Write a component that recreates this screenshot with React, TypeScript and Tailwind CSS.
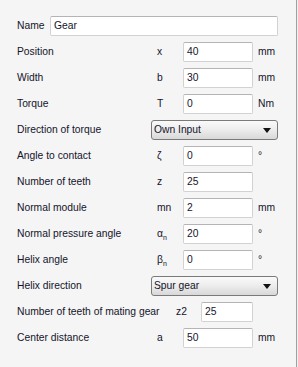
import React from 'react';

type Row = {
  label: string;
  symbol?: React.ReactNode;
  value?: string;
  unit?: string;
  select?: string;
};

const rows: Row[] = [
  { label: 'Position', symbol: 'x', value: '40', unit: 'mm' },
  { label: 'Width', symbol: 'b', value: '30', unit: 'mm' },
  { label: 'Torque', symbol: 'T', value: '0', unit: 'Nm' },
  { label: 'Direction of torque', select: 'Own Input' },
  { label: 'Angle to contact', symbol: 'ζ', value: '0', unit: '°' },
  { label: 'Number of teeth', symbol: 'z', value: '25' },
  { label: 'Normal module', symbol: 'mn', value: '2', unit: 'mm' },
  {
    label: 'Normal pressure angle',
    symbol: (
      <span>
        α<span className="text-[7px] relative top-[3px]">n</span>
      </span>
    ),
    value: '20',
    unit: '°',
  },
  {
    label: 'Helix angle',
    symbol: (
      <span>
        β<span className="text-[7px] relative top-[3px]">n</span>
      </span>
    ),
    value: '0',
    unit: '°',
  },
  { label: 'Helix direction', select: 'Spur gear' },
];

const inputCls =
  'h-[20px] bg-white border border-[#d2d2d2] border-t-[#b4b4b4] rounded-[2px] pl-[3px] flex items-center';

const Select: React.FC<{ value: string }> = ({ value }) => (
  <div className="ml-[134px] w-[127px] h-[20px] rounded-[3px] border border-[#7a7a7a] bg-gradient-to-b from-[#fafafa] via-[#ececec] to-[#d8d8d8] flex items-center justify-between pl-[2px] pr-[6px]">
    <span>{value}</span>
    <svg width="8" height="5" viewBox="0 0 8 5">
      <path d="M0 0 L8 0 L4 5 Z" fill="#111" />
    </svg>
  </div>
);

export default function App() {
  return (
    <div
      className="w-[298px] h-[367px] flex text-[10.3px] text-[#14142a]"
      style={{ fontFamily: '"Liberation Sans", Arial, sans-serif' }}
    >
      <div className="w-[296px] h-full bg-[#f5f5f5] pt-[13px] pl-[17px]">
        <div className="h-[26px] flex items-center">
          <span className="w-[33px]">Name</span>
          <div className={`${inputCls} w-[228px]`}>Gear</div>
        </div>

        {rows.map((r) => (
          <div key={r.label} className="h-[26px] flex items-center">
            {r.select ? (
              <>
                <span className="absolute">{r.label}</span>
                <Select value={r.select} />
              </>
            ) : (
              <>
                <span className="w-[140px]">{r.label}</span>
                <span className="w-[26px]">{r.symbol}</span>
                <div className={`${inputCls} w-[70px]`}>{r.value}</div>
                <span className="ml-[5px]">{r.unit}</span>
              </>
            )}
          </div>
        ))}

        <div className="h-[26px] flex items-center">
          <span className="w-[159px]">Number of teeth of mating gear</span>
          <span className="w-[25px]">z2</span>
          <div className={`${inputCls} w-[52px]`}>25</div>
        </div>

        <div className="h-[26px] flex items-center">
          <span className="w-[140px]">Center distance</span>
          <span className="w-[26px]">a</span>
          <div className={`${inputCls} w-[70px]`}>50</div>
          <span className="ml-[5px]">mm</span>
        </div>
      </div>
      <div className="w-[1px] h-full bg-[#a0a0a0]" />
      <div className="w-[1px] h-full bg-[#f0f0f0]" />
    </div>
  );
}
